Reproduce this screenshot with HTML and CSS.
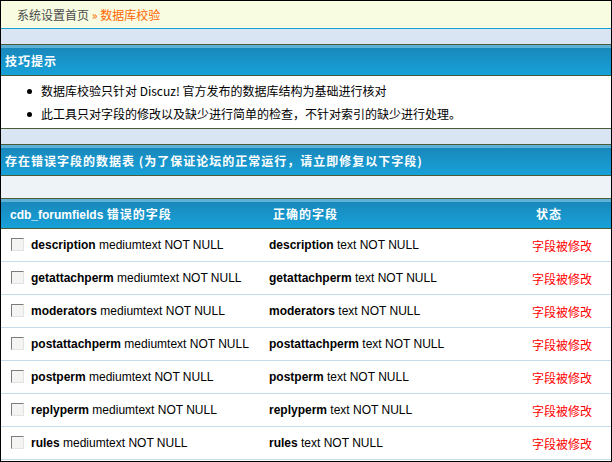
FILE: index.html
```html
<html>

<head>
	<title>数据库校验</title>
	<meta charset="utf-8">
	<link rel="stylesheet" href="styles.css">
</head>

<body>
	<div class="frame">
		<div class="nav">系统设置首页 <span class="cur">&raquo; 数据库校验</span></div>
		<div class="band"></div>

		<div class="hdr">技巧提示</div>
		<div class="tips">
			<ul>
				<li>数据库校验只针对 Discuz! 官方发布的数据库结构为基础进行核对</li>
				<li>此工具只对字段的修改以及缺少进行简单的检查，不针对索引的缺少进行处理。</li>
			</ul>
		</div>
		<div class="band"></div>

		<div class="hdr">存在错误字段的数据表 (为了保证论坛的正常运行，请立即修复以下字段)</div>
		<div class="note"></div>

		<table class="list" cellspacing="0" cellpadding="0">
			<colgroup>
				<col class="c1"><col class="c2"><col class="c3">
			</colgroup>
			<tr class="head">
				<th>cdb_forumfields <span class="cn">错误的字段</span></th>
				<th class="cn">正确的字段</th>
				<th class="cn">状态</th>
			</tr>
			<tr>
				<td><span class="chk"></span><b>description</b> mediumtext NOT NULL</td>
				<td><b>description</b> text NOT NULL</td>
				<td class="state">字段被修改</td>
			</tr>
			<tr>
				<td><span class="chk"></span><b>getattachperm</b> mediumtext NOT NULL</td>
				<td><b>getattachperm</b> text NOT NULL</td>
				<td class="state">字段被修改</td>
			</tr>
			<tr>
				<td><span class="chk"></span><b>moderators</b> mediumtext NOT NULL</td>
				<td><b>moderators</b> text NOT NULL</td>
				<td class="state">字段被修改</td>
			</tr>
			<tr>
				<td><span class="chk"></span><b>postattachperm</b> mediumtext NOT NULL</td>
				<td><b>postattachperm</b> text NOT NULL</td>
				<td class="state">字段被修改</td>
			</tr>
			<tr>
				<td><span class="chk"></span><b>postperm</b> mediumtext NOT NULL</td>
				<td><b>postperm</b> text NOT NULL</td>
				<td class="state">字段被修改</td>
			</tr>
			<tr>
				<td><span class="chk"></span><b>replyperm</b> mediumtext NOT NULL</td>
				<td><b>replyperm</b> text NOT NULL</td>
				<td class="state">字段被修改</td>
			</tr>
			<tr>
				<td><span class="chk"></span><b>rules</b> mediumtext NOT NULL</td>
				<td><b>rules</b> text NOT NULL</td>
				<td class="state">字段被修改</td>
			</tr>
		</table>
	</div>
</body>
</html>
```

FILE: styles.css
```css
body {
	margin: 0;
	background-color: #ffffff;
	color: #000000;
	font-family: "Liberation Sans", "Noto Sans CJK SC", sans-serif;
	font-size: 12px;
}

.frame {
	width: 612px;
	height: 462px;
	box-sizing: border-box;
	border: 1px solid #000000;
	overflow: hidden;
}

.nav {
	height: 27px;
	line-height: 27px;
	padding-left: 16px;
	background-color: #f8fde1;
	border-bottom: 1px solid #1a9ed8;
	color: #4a4a4a;
	font-family: "Noto Sans CJK SC", sans-serif;
}

.nav .cur {
	color: #ff6600;
}

.band {
	height: 15px;
	background-color: #d9e5f3;
	border-bottom: 1px solid #4c5a36;
}

.hdr {
	height: 30px;
	line-height: 31px;
	padding-left: 4px;
	background: linear-gradient(#5db0d6 0, #5db0d6 3px, #1988bb 3px, #17a1d9 100%);
	border-bottom: 1px solid #4c5a36;
	color: #ffffff;
	font-family: "Noto Sans CJK SC", sans-serif;
	font-weight: bold;
	letter-spacing: 1px;
	white-space: nowrap;
}

.tips {
	height: 52px;
	border-bottom: 1px solid #4c5a36;
	font-family: "Noto Sans CJK SC", sans-serif;
}

.tips ul {
	margin: 0;
	padding: 3px 0 0 26px;
	list-style: none;
}

.tips li {
	line-height: 23px;
	white-space: nowrap;
}

.tips li:before {
	content: "";
	display: inline-block;
	width: 5px;
	height: 5px;
	margin-right: 9px;
	border-radius: 50%;
	background-color: #000000;
	vertical-align: 2px;
}

.note {
	height: 22px;
	background-color: #eef3f7;
	border-bottom: 1px solid #4c5a36;
}

table.list {
	width: 610px;
	table-layout: fixed;
	border-collapse: collapse;
	font-family: "Liberation Sans", "Noto Sans CJK SC", sans-serif;
	font-size: 12px;
}

col.c1 { width: 263px; }
col.c2 { width: 263px; }
col.c3 { width: 84px; }

table.list th {
	height: 29px;
	padding: 1px 0 0 9px;
	box-sizing: border-box;
	text-align: left;
	color: #ffffff;
	font-weight: bold;
	background: linear-gradient(#5db0d6 0, #5db0d6 3px, #1988bb 3px, #17a1d9 100%);
	border-bottom: 1px solid #4c5a36;
	white-space: nowrap;
}

table.list .cn {
	font-family: "Noto Sans CJK SC", sans-serif;
	letter-spacing: 1px;
}

table.list td {
	height: 33px;
	padding: 1px 0 0 5px;
	border-bottom: 1px solid #c6dbe9;
	white-space: nowrap;
}

table.list td:first-child {
	padding-left: 10px;
}

td.state {
	color: #ff0000;
	font-family: "Noto Sans CJK SC", sans-serif;
}

.chk {
	display: inline-block;
	width: 11px;
	height: 11px;
	margin-right: 7px;
	vertical-align: -2px;
	border-top: 1px solid #7c7c7c;
	border-left: 1px solid #7c7c7c;
	border-right: 1px solid #e3e3e3;
	border-bottom: 1px solid #e3e3e3;
	background-color: #f4f4f2;
}
```
